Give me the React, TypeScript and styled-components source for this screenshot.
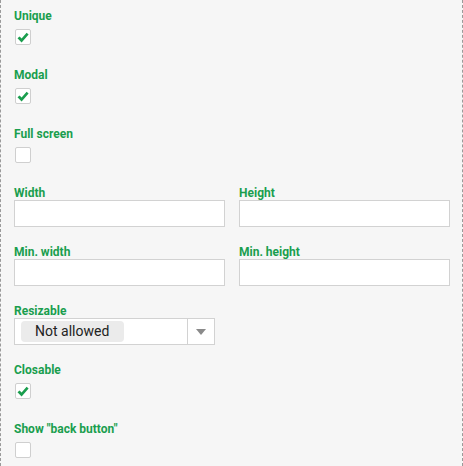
import React from "react";
import styled, { createGlobalStyle } from "styled-components";

const Global = createGlobalStyle`
  html, body { margin: 0; padding: 0; background: #f6f6f6; }
  body { font-family: Roboto, "Liberation Sans", Arial, sans-serif; }
`;

const Panel = styled.div`
  box-sizing: border-box;
  width: 463px;
  height: 466px;
  overflow: hidden;
  background: #f6f6f6;
  border-left: 1px dashed #9a9a9a;
  border-right: 1px dashed #9a9a9a;
  padding: 9px 12px 0 13px;
`;

const Field = styled.div`
  display: flex;
  flex-direction: column;
  margin-bottom: 18px;
`;

const Label = styled.div`
  font-size: 12px;
  line-height: 14px;
  font-weight: 700;
  color: #1a9e4e;
`;

const Row = styled.div`
  display: grid;
  grid-template-columns: 1fr 1fr;
  column-gap: 14px;
`;

const Control = styled.div`
  height: 27px;
  display: flex;
  align-items: flex-start;
`;

const Box = styled.div<{ $checked?: boolean }>`
  box-sizing: border-box;
  width: 16px;
  height: 16px;
  margin: 6px 0 0 1px;
  background: #fff;
  border: 1px solid #cfcfcf;
  border-radius: 2px;
  display: flex;
  align-items: center;
  justify-content: center;
`;

const Input = styled.input`
  box-sizing: border-box;
  width: 100%;
  height: 27px;
  margin: 0;
  border: 1px solid #d2d2d2;
  background: #fff;
  outline: none;
  padding: 0 6px;
  font: inherit;
`;

const Select = styled.div`
  box-sizing: border-box;
  width: 201px;
  height: 27px;
  border: 1px solid #d2d2d2;
  background: #fff;
  display: flex;
  align-items: stretch;
`;

const SelectValue = styled.div`
  flex: 1;
  display: flex;
  align-items: center;
  padding-left: 6px;
`;

const Chip = styled.span`
  background: #ebebeb;
  border-radius: 4px;
  height: 21px;
  line-height: 21px;
  padding: 0 15px 0 14px;
  font-size: 14px;
  color: #222;
`;

const Arrow = styled.div`
  width: 26px;
  border-left: 1px solid #d2d2d2;
  display: flex;
  align-items: center;
  justify-content: center;
`;

const Check = () => (
  <svg width="12" height="11" viewBox="0 0 12 11">
    <path
      fill="#1a9e4e"
      d="M0.5 6.2 L2.6 4.4 L4.6 6.4 L9.6 0.8 L11.6 2.5 L4.6 10.4 Z"
    />
  </svg>
);

const CheckField = ({ label, checked }: { label: string; checked?: boolean }) => (
  <Field>
    <Label>{label}</Label>
    <Control>
      <Box $checked={checked}>{checked && <Check />}</Box>
    </Control>
  </Field>
);

const InputField = ({ label }: { label: string }) => (
  <Field>
    <Label>{label}</Label>
    <Input type="text" />
  </Field>
);

export default function App() {
  return (
    <>
      <Global />
      <Panel>
        <CheckField label="Unique" checked />
        <CheckField label="Modal" checked />
        <CheckField label="Full screen" />
        <Row>
          <InputField label="Width" />
          <InputField label="Height" />
        </Row>
        <Row>
          <InputField label="Min. width" />
          <InputField label="Min. height" />
        </Row>
        <Field>
          <Label>Resizable</Label>
          <Select>
            <SelectValue>
              <Chip>Not allowed</Chip>
            </SelectValue>
            <Arrow>
              <svg width="10" height="6" viewBox="0 0 10 6">
                <path d="M0 0h10L5 6z" fill="#8a8a8a" />
              </svg>
            </Arrow>
          </Select>
        </Field>
        <CheckField label="Closable" checked />
        <CheckField label={'Show "back button"'} />
      </Panel>
    </>
  );
}
